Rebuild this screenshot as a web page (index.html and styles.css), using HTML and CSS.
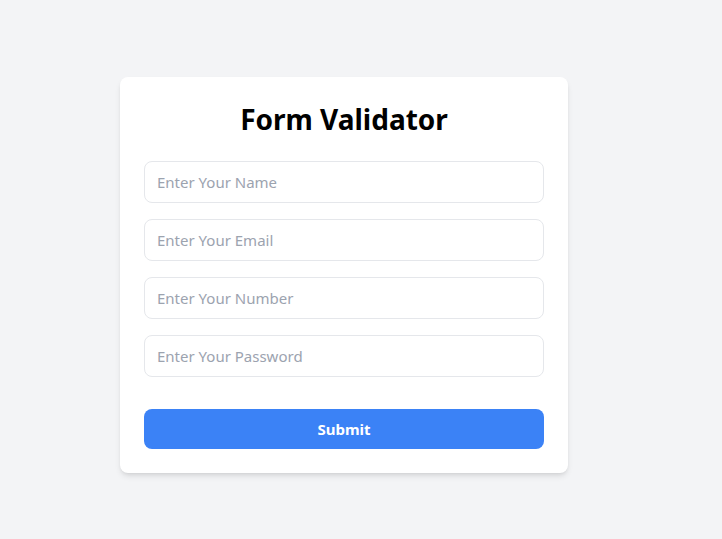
FILE: index.html
```html
<!DOCTYPE html>
<html lang="en">
<head>
<meta charset="UTF-8">
<title>Form Validator</title>
<link rel="stylesheet" href="styles.css">
</head>
<body>
<div class="card">
  <h1 class="title">Form Validator</h1>
  <form class="form">
    <input class="field" type="text" placeholder="Enter Your Name">
    <input class="field" type="email" placeholder="Enter Your Email">
    <input class="field" type="text" placeholder="Enter Your Number">
    <input class="field" type="password" placeholder="Enter Your Password">
    <button class="submit" type="button">Submit</button>
  </form>
</div>
</body>
</html>
```
FILE: styles.css
```css
* { box-sizing: border-box; }
html, body { margin: 0; }
body {
  background: #f3f4f6;
  font-family: "Noto Sans", "Open Sans", sans-serif;
  padding: 77px 0 0 120px;
  min-height: 539px;
}
.card {
  width: 448px;
  background: #fff;
  border-radius: 8px;
  padding: 24px;
  box-shadow: 0 4px 6px -1px rgba(0,0,0,0.1), 0 2px 4px -2px rgba(0,0,0,0.1);
}
.title {
  margin: 0 0 24px;
  font-size: 28px;
  line-height: 36px;
  font-weight: 700;
  text-align: center;
  color: #000;
}
.form {
  display: flex;
  flex-direction: column;
  gap: 16px;
}
.field {
  display: block;
  width: 100%;
  height: 42px;
  border: 1px solid #e5e7eb;
  border-radius: 8px;
  padding: 0 12px;
  font-family: inherit;
  font-size: 15px;
  color: #111827;
  outline: none;
}
.field::placeholder { color: #9ca3af; }
.submit {
  margin-top: 16px;
  height: 40px;
  width: 100%;
  border: none;
  border-radius: 8px;
  background: #3b82f6;
  color: #fff;
  font-family: inherit;
  font-size: 15px;
  font-weight: 700;
}
```
